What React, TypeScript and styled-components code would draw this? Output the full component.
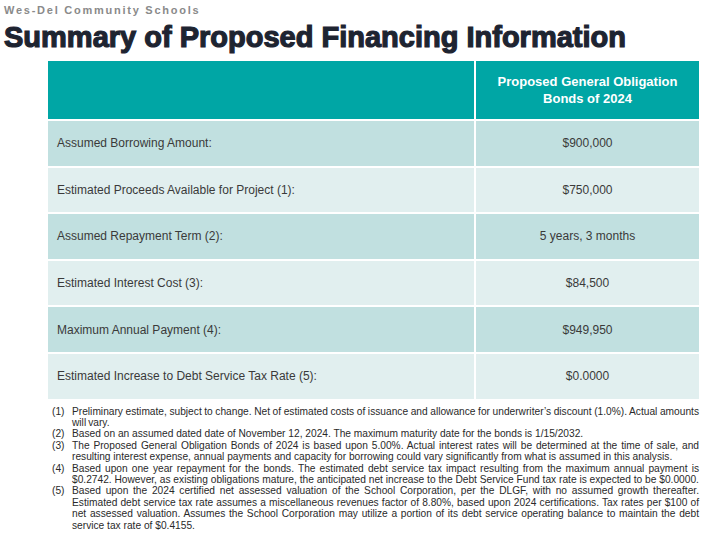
import React from "react";
import styled, { createGlobalStyle } from "styled-components";

const Global = createGlobalStyle`
  html, body { margin: 0; padding: 0; background: #ffffff; }
  body { font-family: "Liberation Sans", Arial, sans-serif; }
`;

const Page = styled.div`
  width: 726px;
  height: 553px;
  overflow: hidden;
  position: relative;
  background: #fff;
`;

const Header = styled.header`
  padding: 3px 0 0 4px;
`;

const Org = styled.div`
  font-family: "Liberation Sans", Arial, sans-serif;
  font-weight: 700;
  font-size: 11px;
  letter-spacing: 1.75px;
  color: #8a8a8a;
  line-height: 15px;
`;

const Title = styled.h1`
  margin: 0;
  font-family: "Liberation Sans", Arial, sans-serif;
  font-weight: 700;
  font-size: 29px;
  line-height: 39px;
  color: #1e2431;
  -webkit-text-stroke: 1.2px #1e2431;
  letter-spacing: 0px;
`;

const Table = styled.div`
  margin: 4px 0 0 48px;
  width: 651px;
  display: flex;
  flex-direction: column;
  gap: 2px;
`;

const Row = styled.div<{ $tone: "head" | "dark" | "light" }>`
  display: grid;
  grid-template-columns: 426px 1fr;
  column-gap: 2px;
  height: ${(p) => (p.$tone === "head" ? "58px" : "44.6px")};
  & > div {
    background: ${(p) =>
      p.$tone === "head" ? "#00a6a5" : p.$tone === "dark" ? "#c1e0e0" : "#e1efef"};
  }
`;

const LabelCell = styled.div`
  display: flex;
  align-items: center;
  padding-left: 9px;
  font-size: 12px;
  color: #3a3a3a;
`;

const ValueCell = styled.div`
  display: flex;
  align-items: center;
  justify-content: center;
  font-size: 12px;
  color: #3a3a3a;
`;

const HeadCell = styled.div`
  display: flex;
  align-items: center;
  justify-content: center;
  text-align: center;
  font-weight: 700;
  font-size: 13px;
  line-height: 17px;
  color: #ffffff;
`;

const Notes = styled.ol`
  list-style: none;
  margin: 7px 0 0 52px;
  padding: 0;
  width: 647px;
  font-size: 10.2px;
  line-height: 11.4px;
  color: #2a2a2a;
`;

const Note = styled.li`
  display: grid;
  grid-template-columns: 20px 1fr;
`;

const NoteNum = styled.span``;

const NoteText = styled.span<{ $tight?: boolean }>`
  text-align: justify;
  word-spacing: ${(p) => (p.$tight ? "-0.8px" : "0")};
`;

const rows: { label: string; value: string }[] = [
  { label: "Assumed Borrowing Amount:", value: "$900,000" },
  { label: "Estimated Proceeds Available for Project (1):", value: "$750,000" },
  { label: "Assumed Repayment Term (2):", value: "5 years, 3 months" },
  { label: "Estimated Interest Cost (3):", value: "$84,500" },
  { label: "Maximum Annual Payment (4):", value: "$949,950" },
  { label: "Estimated Increase to Debt Service Tax Rate (5):", value: "$0.0000" },
];

const notes = [
  "Preliminary estimate, subject to change. Net of estimated costs of issuance and allowance for underwriter’s discount (1.0%). Actual amounts will vary.",
  "Based on an assumed dated date of November 12, 2024. The maximum maturity date for the bonds is 1/15/2032.",
  "The Proposed General Obligation Bonds of 2024 is based upon 5.00%. Actual interest rates will be determined at the time of sale, and resulting interest expense, annual payments and capacity for borrowing could vary significantly from what is assumed in this analysis.",
  "Based upon one year repayment for the bonds. The estimated debt service tax impact resulting from the maximum annual payment is $0.2742. However, as existing obligations mature, the anticipated net increase to the Debt Service Fund tax rate is expected to be $0.0000.",
  "Based upon the 2024 certified net assessed valuation of the School Corporation, per the DLGF, with no assumed growth thereafter. Estimated debt service tax rate assumes a miscellaneous revenues factor of 8.80%, based upon 2024 certifications.  Tax rates per $100 of net assessed valuation. Assumes the School Corporation may utilize a portion of its debt service operating balance to maintain the debt service tax rate of $0.4155.",
];

export default function App() {
  return (
    <Page>
      <Global />
      <Header>
        <Org>Wes-Del Community Schools</Org>
        <Title>Summary of Proposed Financing Information</Title>
      </Header>
      <Table>
        <Row $tone="head">
          <HeadCell />
          <HeadCell>
            Proposed General Obligation
            <br />
            Bonds of 2024
          </HeadCell>
        </Row>
        {rows.map((r, i) => (
          <Row key={r.label} $tone={i % 2 === 0 ? "dark" : "light"}>
            <LabelCell>{r.label}</LabelCell>
            <ValueCell>{r.value}</ValueCell>
          </Row>
        ))}
      </Table>
      <Notes>
        {notes.map((n, i) => (
          <Note key={i}>
            <NoteNum>({i + 1})</NoteNum>
            <NoteText $tight={i === 0}>{n}</NoteText>
          </Note>
        ))}
      </Notes>
    </Page>
  );
}
